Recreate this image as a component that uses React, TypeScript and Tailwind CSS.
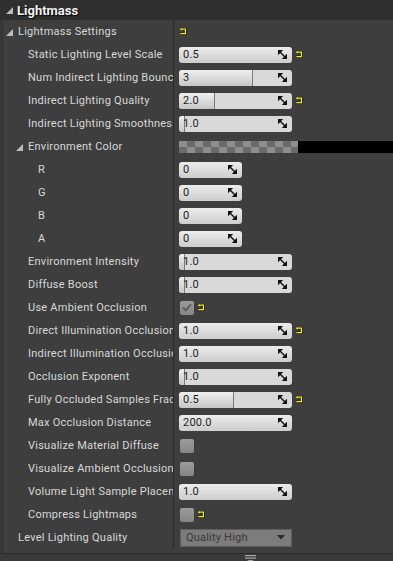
import React from "react";

type Val =
  | { kind: "none" }
  | { kind: "num"; text: string; fill?: number; w?: number }
  | { kind: "check"; checked: boolean }
  | { kind: "color" }
  | { kind: "drop"; text: string };

type Row = { label: string; indent: number; arrow?: boolean; val: Val; reset?: boolean };

const rows: Row[] = [
  { label: "Lightmass Settings", indent: 19, arrow: true, val: { kind: "none" }, reset: true },
  { label: "Static Lighting Level Scale", indent: 29, val: { kind: "num", text: "0.5" }, reset: true },
  { label: "Num Indirect Lighting Bounces", indent: 29, val: { kind: "num", text: "3", fill: 74 } },
  { label: "Indirect Lighting Quality", indent: 29, val: { kind: "num", text: "2.0", fill: 36 }, reset: true },
  { label: "Indirect Lighting Smoothness", indent: 29, val: { kind: "num", text: "1.0", fill: 6 } },
  { label: "Environment Color", indent: 29, arrow: true, val: { kind: "color" } },
  { label: "R", indent: 39, val: { kind: "num", text: "0", w: 63 } },
  { label: "G", indent: 39, val: { kind: "num", text: "0", w: 63 } },
  { label: "B", indent: 39, val: { kind: "num", text: "0", w: 63 } },
  { label: "A", indent: 39, val: { kind: "num", text: "0", w: 63 } },
  { label: "Environment Intensity", indent: 29, val: { kind: "num", text: "1.0", fill: 6 } },
  { label: "Diffuse Boost", indent: 29, val: { kind: "num", text: "1.0", fill: 6 } },
  { label: "Use Ambient Occlusion", indent: 29, val: { kind: "check", checked: true }, reset: true },
  { label: "Direct Illumination Occlusion Fraction", indent: 29, val: { kind: "num", text: "1.0" }, reset: true },
  { label: "Indirect Illumination Occlusion Fraction", indent: 29, val: { kind: "num", text: "1.0" } },
  { label: "Occlusion Exponent", indent: 29, val: { kind: "num", text: "1.0", fill: 6 } },
  { label: "Fully Occluded Samples Fraction", indent: 29, val: { kind: "num", text: "0.5", fill: 55 }, reset: true },
  { label: "Max Occlusion Distance", indent: 29, val: { kind: "num", text: "200.0" } },
  { label: "Visualize Material Diffuse", indent: 29, val: { kind: "check", checked: false } },
  { label: "Visualize Ambient Occlusion", indent: 29, val: { kind: "check", checked: false } },
  { label: "Volume Light Sample Placement Scale", indent: 29, val: { kind: "num", text: "1.0" } },
  { label: "Compress Lightmaps", indent: 29, val: { kind: "check", checked: false }, reset: true },
  { label: "Level Lighting Quality", indent: 19, val: { kind: "drop", text: "Quality High" } },
];

function Tri({ className }: { className?: string }) {
  return (
    <svg width="7" height="7" viewBox="0 0 7 7" className={className}>
      <polygon points="7,0 7,7 0,7" fill="#bdbdbd" />
    </svg>
  );
}

function Reset() {
  return (
    <svg width="8" height="7" viewBox="0 0 8 7" className="shrink-0">
      <path d="M2.2 1.2 H6.4 V5.6 H1.4" fill="none" stroke="#1a1a00" strokeWidth="2.2" />
      <path d="M2.2 1.2 H6.4 V5.6 H1.4" fill="none" stroke="#ecec30" strokeWidth="1.2" />
      <polygon points="0.6,1.2 2.8,0 2.8,2.6" fill="#ecec30" />
    </svg>
  );
}

function Spin() {
  return (
    <svg width="9" height="9" viewBox="0 0 9 9" className="shrink-0">
      <polygon points="0,0 5.2,0 0,5.2" fill="#111" />
      <polygon points="9,3.8 9,9 3.8,9" fill="#111" />
      <line x1="1" y1="1" x2="8" y2="8" stroke="#111" strokeWidth="1.4" />
    </svg>
  );
}

function NumField({ text, fill, w }: { text: string; fill?: number; w?: number }) {
  const width = w ?? 113;
  const slider = fill !== undefined;
  return (
    <div
      className={`relative h-[16px] rounded-[3px] overflow-hidden flex items-center shrink-0 ${
        slider ? "bg-[#d9d9d9]" : "bg-gradient-to-b from-[#ececec] to-[#cdcdcd]"
      } ${width === 63 ? "w-[63px]" : "w-[113px]"}`}
    >
      {slider && (
        <div
          className="absolute left-0 top-0 bottom-0 bg-gradient-to-b from-[#f0f0f0] to-[#c6c6c6] border-r border-[#7a7a7a] rounded-l-[3px]"
          style={{ width: fill }}
        />
      )}
      <span className="relative pl-[4px] text-[11px] tracking-[0.2px] text-[#1c1c1c] leading-none flex-1">{text}</span>
      <div className="relative pr-[5px] flex items-center">
        <Spin />
      </div>
    </div>
  );
}

function Check({ checked }: { checked: boolean }) {
  return (
    <div className="w-[14px] h-[14px] rounded-[2px] bg-gradient-to-b from-[#9c9c9c] to-[#858585] flex items-center justify-center ml-[1px] shrink-0">
      {checked && (
        <svg width="10" height="9" viewBox="0 0 10 9">
          <path d="M1 4.8 L3.8 7.4 L9 1.4" fill="none" stroke="#5b5b5b" strokeWidth="2" />
        </svg>
      )}
    </div>
  );
}

function Value({ v }: { v: Val }) {
  switch (v.kind) {
    case "none":
      return null;
    case "num":
      return <NumField text={v.text} fill={v.fill} w={v.w} />;
    case "check":
      return <Check checked={v.checked} />;
    case "color":
      return (
        <div className="flex h-[12px] w-full">
          <div className="w-[119px] h-full bg-[repeating-conic-gradient(#6b6b6b_0%_25%,#8d8d8d_0%_50%)] bg-[length:16px_12px]" />
          <div className="flex-1 h-full bg-black" />
        </div>
      );
    case "drop":
      return (
        <div className="w-[112px] h-[18px] ml-[1px] bg-[#7c7c7c] border border-[#5e5e5e] flex items-center px-[5px]">
          <span className="flex-1 text-[11px] tracking-[0.2px] text-[#383838] leading-none">{v.text}</span>
          <svg width="8" height="5" viewBox="0 0 8 5" className="mr-[1px]">
            <polygon points="0,0 8,0 4,4.5" fill="#2a2a2a" />
          </svg>
        </div>
      );
  }
}

export default function App() {
  return (
    <div className="w-[393px] h-[561px] bg-[#3e3e3e] overflow-hidden flex flex-col font-['Roboto','Liberation_Sans',sans-serif]">
      <div className="h-[20px] shrink-0 bg-[#2f2f2f] flex items-center">
        <Tri className="ml-[6px] mt-[1px]" />
        <span className="ml-[4px] text-[13px] font-bold text-[#f2f2f2] leading-none [text-shadow:1px_1px_1px_#000]">
          Lightmass
        </span>
      </div>
      <div className="flex flex-1 min-h-0">
        <div className="w-[3px] bg-[#383838] border-r border-[#333333] shrink-0" />
        <div className="flex-1 flex flex-col">
          <div className="flex flex-col pb-[4px]">
            {rows.map((r, i) => (
              <div key={i} className="h-[23px] flex">
                <div
                  className="w-[171px] shrink-0 overflow-hidden whitespace-nowrap flex items-center border-r border-[#2a2a2a]"
                  style={{ paddingLeft: r.arrow ? r.indent - 16 : r.indent - 4 }}
                >
                  {r.arrow && <Tri className="mr-[5px] mt-[1px] shrink-0" />}
                  <span className="block overflow-hidden text-[11px] tracking-[0.25px] text-[#d8d8d8] leading-[13px]">
                    {r.label}
                  </span>
                </div>
                <div className="flex-1 flex items-center pl-[5px] gap-[3px] min-w-0">
                  <Value v={r.val} />
                  {r.reset && <Reset />}
                </div>
              </div>
            ))}
          </div>
        </div>
      </div>
      <div className="h-[8px] shrink-0 bg-[#3a3a3a] border-t border-[#2c2c2c] flex">
        <svg width="11" height="7" viewBox="0 0 11 7" className="mt-[1px] ml-[245px]">
          <rect x="0" y="0" width="11" height="1.2" fill="#a8a8a8" />
          <rect x="0" y="2.5" width="11" height="1.2" fill="#a8a8a8" />
          <polygon points="2,5 9,5 5.5,7" fill="#a8a8a8" />
        </svg>
      </div>
    </div>
  );
}
